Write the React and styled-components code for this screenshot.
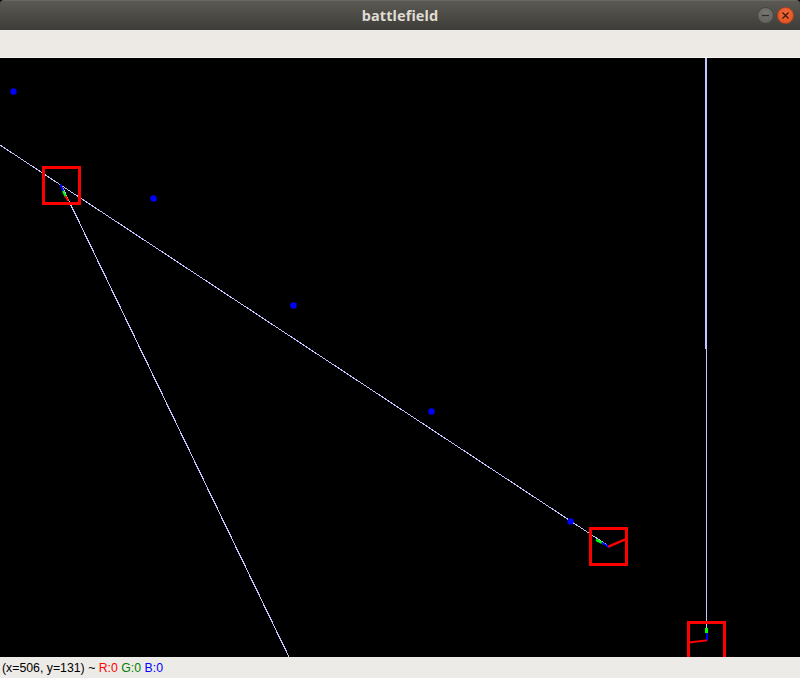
import React from "react";
import styled, { createGlobalStyle } from "styled-components";

const Global = createGlobalStyle`
  html, body { margin: 0; padding: 0; background: #000; }
  #root { height: 100vh; }
`;

const Window = styled.div`
  display: flex;
  flex-direction: column;
  width: 800px;
  height: 678px;
  overflow: hidden;
  font-family: "Liberation Sans", Arial, sans-serif;
`;

const TitleBar = styled.div`
  position: relative;
  height: 30px;
  flex: 0 0 30px;
  display: flex;
  align-items: center;
  justify-content: center;
  background: linear-gradient(#5b5953, #3d3c38);
  border-top: 1px solid #6a6862;
  box-sizing: border-box;
  border-radius: 4px 4px 0 0;
`;

const Title = styled.span`
  font-family: "Noto Sans", "DejaVu Sans", sans-serif;
  font-weight: 700;
  font-size: 14.5px;
  color: #dfdbd2;
  letter-spacing: 0.1px;
  margin-top: -1px;
`;

const WindowButtons = styled.div`
  position: absolute;
  right: 6px;
  top: 6px;
  display: flex;
  gap: 3px;
`;

const CircleButton = styled.div`
  width: 17px;
  height: 17px;
  border-radius: 50%;
  display: flex;
  align-items: center;
  justify-content: center;
  box-sizing: border-box;
  border: 1px solid ${(p) => (p.$close ? "#b8401a" : "#45443f")};
  background: ${(p) =>
    p.$close
      ? "radial-gradient(circle at 50% 35%, #f26a3a, #e0501c)"
      : "radial-gradient(circle at 50% 35%, #7b7974, #5c5a55)"};
`;

const Toolbar = styled.div`
  height: 28px;
  flex: 0 0 28px;
  box-sizing: border-box;
  background: #edeae5;
  border-bottom: 1px solid #f7f6f4;
`;

const Canvas = styled.div`
  flex: 1 1 auto;
  background: #000;
  overflow: hidden;
  svg {
    display: block;
  }
`;

const StatusBar = styled.div`
  height: 21px;
  flex: 0 0 21px;
  background: #edebe7;
  display: flex;
  align-items: center;
  padding-left: 2px;
`;

const StatusText = styled.span`
  font-size: 12.3px;
  color: #000;
  white-space: pre;
`;

const Channel = styled.span`
  color: ${(p) => p.$color};
`;

const LINE = "#c4c4ff";
const RED = "#ff0000";

const dots = [
  [13, 33],
  [153, 140],
  [293, 247],
  [431, 353],
  [570, 463],
];

const boxes = [
  [43.5, 109.5],
  [590.5, 470.5],
  [688.5, 564.5],
];

function Scene() {
  return (
    <svg width="800" height="599" viewBox="0 0 800 599">
      <g shapeRendering="crispEdges">
        <line x1="0" y1="87" x2="607" y2="487" stroke={LINE} strokeWidth="1" />
        <line x1="61.5" y1="127.5" x2="294.3" y2="610" stroke={LINE} strokeWidth="1.2" />
        <line x1="706" y1="0" x2="706" y2="291" stroke={LINE} strokeWidth="2" />
        <line x1="706.5" y1="291" x2="706.5" y2="570" stroke={LINE} strokeWidth="1" />
      </g>
      {dots.map(([x, y], i) => (
        <circle key={i} cx={x + 0.5} cy={y + 0.5} r="3.2" fill="#0000ff" />
      ))}
      <g shapeRendering="crispEdges">
        {boxes.map(([x, y], i) => (
          <rect
            key={i}
            x={x}
            y={y}
            width="36"
            height="36"
            fill="none"
            stroke={RED}
            strokeWidth="3.4"
            strokeLinejoin="round"
          />
        ))}
      </g>
      <g strokeWidth="2" strokeLinecap="round">
        <line x1="60.7" y1="127" x2="63.3" y2="133.7" stroke="#0000ff" />
        <line x1="63.3" y1="133.7" x2="65.7" y2="138.7" stroke="#00ff00" />
        <line x1="65.7" y1="138.7" x2="67.7" y2="142" stroke={RED} />

        <line x1="597" y1="482.3" x2="602.3" y2="485" stroke="#00ff00" strokeWidth="2.5" />
        <line x1="602.3" y1="485" x2="609" y2="489" stroke="#0000ff" />
        <line x1="609" y1="488.3" x2="627" y2="480.7" stroke={RED} strokeWidth="2.4" />

        <line x1="706.5" y1="570" x2="706.5" y2="575" stroke="#00ff00" strokeWidth="3" strokeLinecap="butt" />
        <line x1="707" y1="575" x2="707" y2="582.7" stroke="#0000ff" strokeLinecap="butt" />
        <line x1="689" y1="584.5" x2="706" y2="582.5" stroke={RED} strokeWidth="2.2" />
      </g>
    </svg>
  );
}

export default function App() {
  return (
    <>
      <Global />
      <Window>
        <TitleBar>
          <Title>battlefield</Title>
          <WindowButtons>
            <CircleButton>
              <svg width="9" height="9" viewBox="0 0 9 9">
                <line x1="1" y1="4.5" x2="8" y2="4.5" stroke="#2e2d2a" strokeWidth="1.3" />
              </svg>
            </CircleButton>
            <CircleButton $close>
              <svg width="9" height="9" viewBox="0 0 9 9">
                <path d="M1.5 1.5 L7.5 7.5 M7.5 1.5 L1.5 7.5" stroke="#3a1a0c" strokeWidth="1.3" />
              </svg>
            </CircleButton>
          </WindowButtons>
        </TitleBar>
        <Toolbar />
        <Canvas>
          <Scene />
        </Canvas>
        <StatusBar>
          <StatusText>
            {"(x=506, y=131) ~ "}
            <Channel $color="#ff0000">R:0</Channel>
            {" "}
            <Channel $color="#008000">G:0</Channel>
            {" "}
            <Channel $color="#0000ff">B:0</Channel>
          </StatusText>
        </StatusBar>
      </Window>
    </>
  );
}
